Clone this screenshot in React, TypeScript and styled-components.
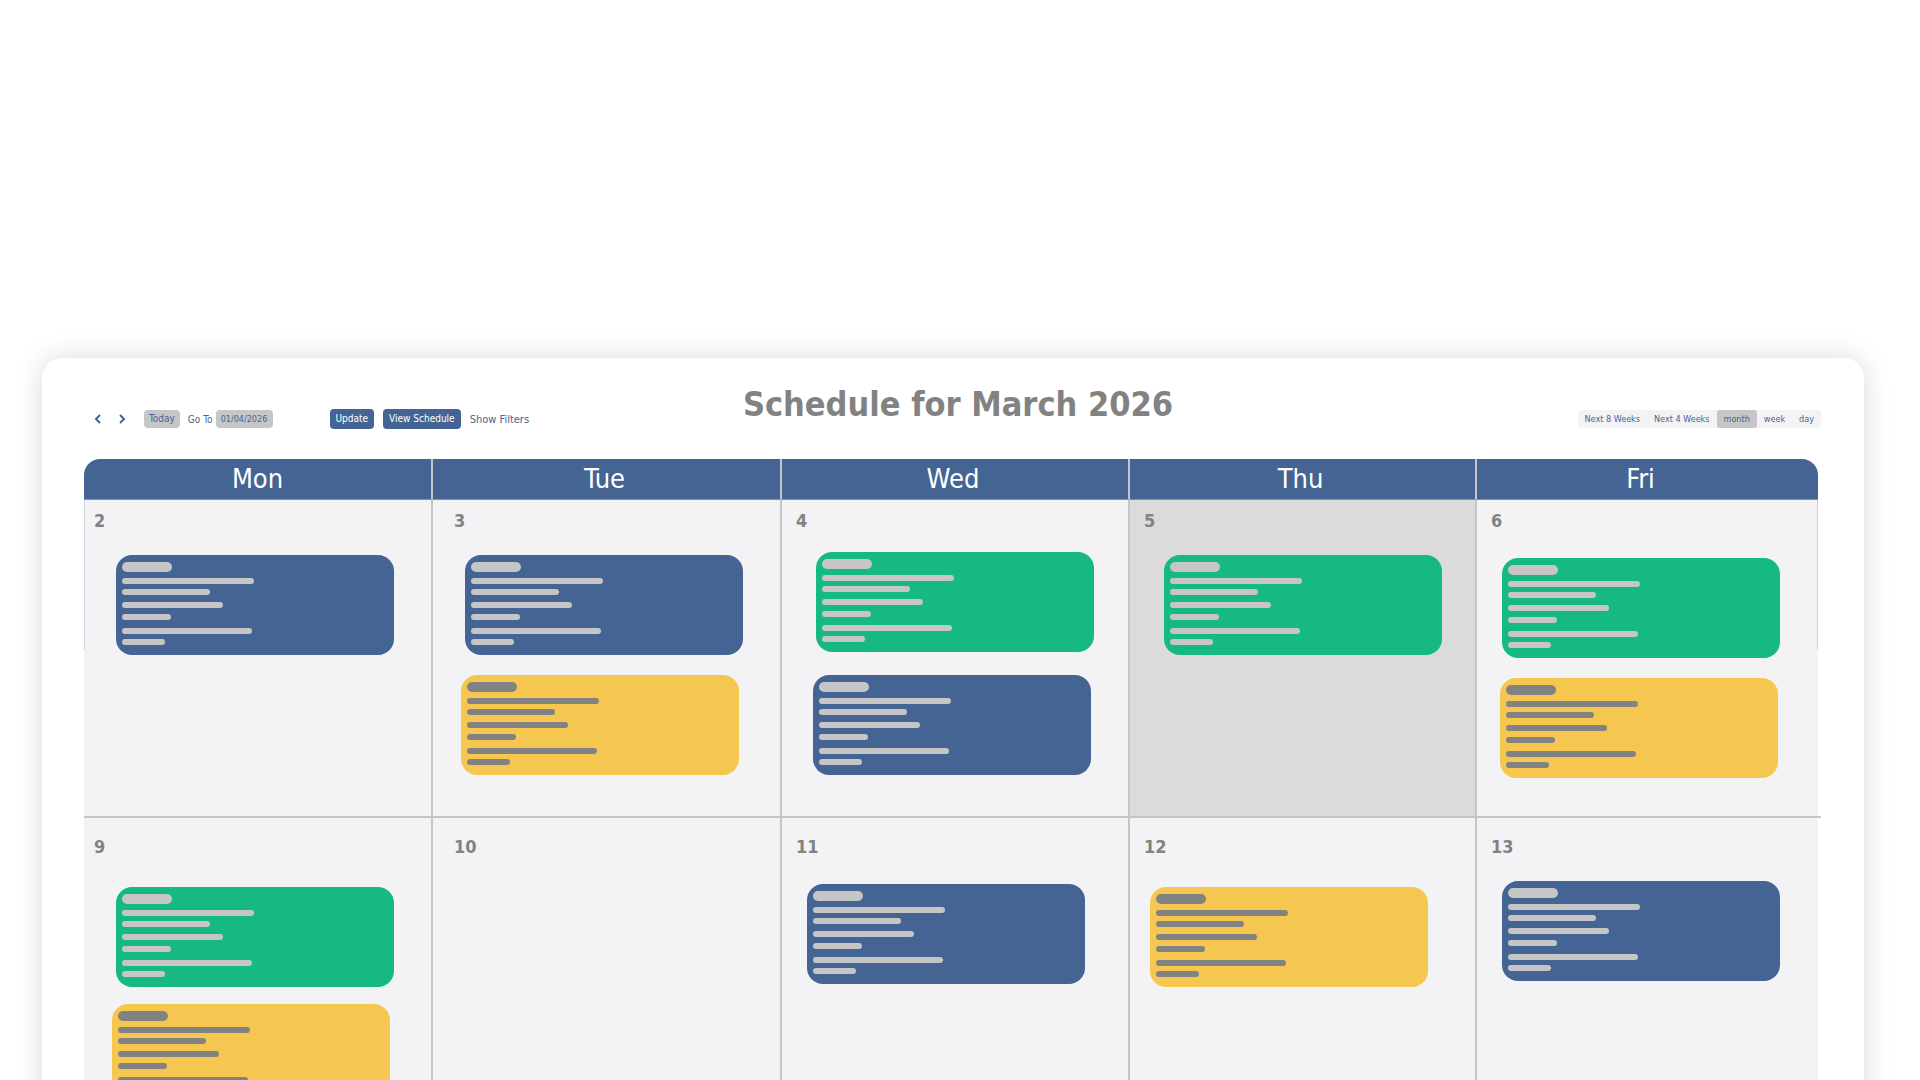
import React from "react";
import styled, { createGlobalStyle } from "styled-components";

const color = {
  blue: "#446594",
  green: "#15b981",
  yellow: "#f6c750",
  silver: "#c6c6c6",
  gray: "#828282",
  cell: "#f3f3f6",
  today: "#dbdbdb",
};

const GlobalStyle = createGlobalStyle`
  *, *::before, *::after { box-sizing: border-box; }
  body {
    margin: 0;
    background: #fff;
    font-family: "DejaVu Sans Condensed", Tahoma, "DejaVu Sans", sans-serif;
  }
  button, input { font: inherit; }
`;

const Page = styled.main`
  height: 100vh;
  overflow: hidden;
  padding: 358px 56px 0 42px;
`;

const Panel = styled.section`
  min-height: 100%;
  padding: 22px 46px 48px 42px;
  border-radius: 20px;
  background: #fff;
  box-shadow: 0 0 28px rgba(0, 0, 0, 0.15);
`;

const Toolbar = styled.header`
  display: grid;
  grid-template-columns: 1fr auto 1fr;
  height: 79px;
`;

const Title = styled.h1`
  margin: 0;
  padding-left: 14px;
  color: ${color.gray};
  font-size: 34px;
  font-weight: 700;
  line-height: 48px;
`;

const Tools = styled.div`
  display: flex;
  align-items: center;
  height: 20px;
  margin-top: 29px;
  padding-left: 8px;
`;

const Arrow = styled.button`
  display: flex;
  align-items: center;
  justify-content: center;
  width: 12px;
  height: 20px;
  margin-right: 12px;
  padding: 0;
  border: 0;
  background: none;
  color: ${color.blue};
`;

const TodayButton = styled.button`
  height: 18px;
  margin: 0 8px 0 4px;
  padding: 0 5px;
  border: 0;
  border-radius: 4px;
  background: ${color.silver};
  color: ${color.blue};
  font-size: 10px;
  line-height: 18px;
`;

const GoTo = styled.label`
  display: flex;
  align-items: center;
  gap: 3px;
  color: #56687f;
  font-size: 10px;
  white-space: nowrap;
`;

const DateInput = styled.input`
  width: 57px;
  height: 18px;
  padding: 0;
  border: 0;
  border-radius: 4px;
  background: ${color.silver};
  color: ${color.blue};
  font-size: 9px;
  text-align: center;
`;

const Actions = styled.div`
  display: flex;
  align-items: center;
  gap: 9px;
  margin-left: 57px;
`;

const ActionButton = styled.button`
  height: 20px;
  padding: 0 6px;
  border: 0;
  border-radius: 4px;
  background: ${color.blue};
  color: #fff;
  font-size: 10px;
  line-height: 20px;
  white-space: nowrap;
`;

const FilterLink = styled.a`
  color: ${color.blue};
  font-size: 11px;
  text-decoration: none;
  white-space: nowrap;
`;

const ViewSwitch = styled.nav`
  display: flex;
  justify-self: end;
  height: 18px;
  margin: 30px -3px 0 0;
  border-radius: 4px;
  background: ${color.cell};
`;

const ViewButton = styled.button<{ $active?: boolean }>`
  padding: 0 7px;
  border: 0;
  border-radius: 3px;
  background: ${(p) => (p.$active ? color.silver : "transparent")};
  color: ${color.blue};
  font-size: 9px;
  line-height: 18px;
  white-space: nowrap;
`;

const Calendar = styled.table`
  width: 100%;
  table-layout: fixed;
  border-collapse: separate;
  border-spacing: 0;
`;

const DayHead = styled.th`
  height: 41px;
  padding: 0 4px 0 0;
  border-right: 2px solid ${color.silver};
  border-bottom: 1px solid #7f92b4;
  background: ${color.blue};
  color: #fff;
  font-size: 27px;
  font-weight: 400;
  line-height: 36px;

  &:first-child { padding-right: 0; border-top-left-radius: 16px; }
  &:last-child { padding-right: 14px; border-right: 0; border-top-right-radius: 16px; }
`;

const DayCell = styled.td<{ $today?: boolean }>`
  position: relative;
  height: 318px;
  padding: 0;
  border-right: 2px solid ${color.silver};
  border-bottom: 2px solid ${color.silver};
  background: ${(p) => (p.$today ? color.today : color.cell)};
  vertical-align: top;

  &:last-child { border-right: 0; }

  /* A fine edge runs down both sides of the first week. */
  tr:first-child > &:first-child {
    background: linear-gradient(#c9d6de, #c9d6de) left top / 1px 150px no-repeat ${color.cell};
  }
  tr:first-child > &:last-child {
    background: linear-gradient(#c9d6de, #c9d6de) right top / 1px 150px no-repeat ${color.cell};
  }

  /* The week rule runs slightly past the last column. */
  &:last-child::after {
    content: "";
    position: absolute;
    right: -3px;
    bottom: -2px;
    width: 3px;
    height: 2px;
    background: ${color.silver};
  }
`;

const DayNumber = styled.time<{ $inset: number; $drop: number }>`
  display: block;
  padding: ${(p) => p.$drop}px 0 0 ${(p) => p.$inset}px;
  color: ${color.gray};
  font-size: 18px;
  font-weight: 700;
  line-height: 22px;
`;

const Events = styled.div<{ $lead: number; $gap: number }>`
  display: flex;
  flex-direction: column;
  gap: ${(p) => p.$gap}px;
  padding-top: ${(p) => p.$lead}px;
`;

type Tone = "blue" | "green" | "yellow";

const EventCard = styled.article<{ $tone: Tone; $indent: number }>`
  width: 278px;
  height: 100px;
  margin-left: ${(p) => p.$indent}px;
  padding: 7px 6px;
  border-radius: 16px;
  background: ${(p) => color[p.$tone]};
  color: ${(p) => (p.$tone === "yellow" ? color.gray : color.silver)};
`;

const Bar = styled.div<{ $width: number; $gap: number; $tall?: boolean }>`
  width: ${(p) => p.$width}px;
  height: ${(p) => (p.$tall ? 10 : 6)}px;
  margin-top: ${(p) => p.$gap}px;
  border-radius: 5px;
  background: currentColor;
`;

const lines = [
  { width: 132, gap: 6 },
  { width: 88, gap: 5 },
  { width: 101, gap: 7 },
  { width: 49, gap: 6 },
  { width: 130, gap: 8 },
  { width: 43, gap: 5 },
];

interface Day {
  date: number;
  lead: number;
  gap?: number;
  today?: boolean;
  events: { tone: Tone; indent: number }[];
}

const columns = [
  { name: "Mon", width: 349, inset: 10 },
  { name: "Tue", width: 349, inset: 21 },
  { name: "Wed", width: 348, inset: 14 },
  { name: "Thu", width: 347, inset: 14 },
  { name: "Fri", width: 341, inset: 14 },
];
const totalWidth = columns.reduce((sum, c) => sum + c.width, 0);

const weeks: { drop: number; days: Day[] }[] = [
  {
    drop: 10,
    days: [
      { date: 2, lead: 23, events: [{ tone: "blue", indent: 32 }] },
      { date: 3, lead: 23, events: [{ tone: "blue", indent: 32 }, { tone: "yellow", indent: 28 }] },
      { date: 4, lead: 20, gap: 23, events: [{ tone: "green", indent: 34 }, { tone: "blue", indent: 31 }] },
      { date: 5, lead: 23, today: true, events: [{ tone: "green", indent: 34 }] },
      { date: 6, lead: 26, events: [{ tone: "green", indent: 25 }, { tone: "yellow", indent: 23 }] },
    ],
  },
  {
    drop: 18,
    days: [
      { date: 9, lead: 29, gap: 17, events: [{ tone: "green", indent: 32 }, { tone: "yellow", indent: 28 }] },
      { date: 10, lead: 29, events: [] },
      { date: 11, lead: 26, events: [{ tone: "blue", indent: 25 }] },
      { date: 12, lead: 29, events: [{ tone: "yellow", indent: 20 }] },
      { date: 13, lead: 23, events: [{ tone: "blue", indent: 25 }] },
    ],
  },
];

const views = ["Next 8 Weeks", "Next 4 Weeks", "month", "week", "day"];

function Chevron({ points }: { points: string }) {
  return (
    <svg width="8" height="10" viewBox="0 0 8 10" fill="none" stroke="currentColor" strokeWidth="2" aria-hidden="true">
      <polyline points={points} />
    </svg>
  );
}

function Event({ tone, indent }: { tone: Tone; indent: number }) {
  return (
    <EventCard $tone={tone} $indent={indent}>
      <Bar $width={50} $gap={0} $tall />
      {lines.map((line, i) => (
        <Bar key={i} $width={line.width} $gap={line.gap} />
      ))}
    </EventCard>
  );
}

export default function App() {
  return (
    <Page>
      <GlobalStyle />
      <Panel>
        <Toolbar>
          <Tools>
            <Arrow type="button" aria-label="Previous month">
              <Chevron points="6,1 2,5 6,9" />
            </Arrow>
            <Arrow type="button" aria-label="Next month">
              <Chevron points="2,1 6,5 2,9" />
            </Arrow>
            <TodayButton type="button">Today</TodayButton>
            <GoTo>
              Go To
              <DateInput type="text" defaultValue="01/04/2026" />
            </GoTo>
            <Actions>
              <ActionButton type="button">Update</ActionButton>
              <ActionButton type="button">View Schedule</ActionButton>
              <FilterLink href="#filters">Show Filters</FilterLink>
            </Actions>
          </Tools>
          <Title>Schedule for March 2026</Title>
          <ViewSwitch>
            {views.map((view) => (
              <ViewButton key={view} type="button" $active={view === "month"}>
                {view}
              </ViewButton>
            ))}
          </ViewSwitch>
        </Toolbar>
        <Calendar>
          <colgroup>
            {columns.map((c) => (
              <col key={c.name} style={{ width: `${(c.width / totalWidth) * 100}%` }} />
            ))}
          </colgroup>
          <thead>
            <tr>
              {columns.map((c) => (
                <DayHead key={c.name} scope="col">{c.name}</DayHead>
              ))}
            </tr>
          </thead>
          <tbody>
            {weeks.map((week) => (
              <tr key={week.drop}>
                {week.days.map((day, i) => (
                  <DayCell key={day.date} $today={day.today}>
                    <DayNumber $inset={columns[i].inset} $drop={week.drop}>{day.date}</DayNumber>
                    <Events $lead={day.lead} $gap={day.gap ?? 20}>
                      {day.events.map((event, n) => (
                        <Event key={n} {...event} />
                      ))}
                    </Events>
                  </DayCell>
                ))}
              </tr>
            ))}
          </tbody>
        </Calendar>
      </Panel>
    </Page>
  );
}
